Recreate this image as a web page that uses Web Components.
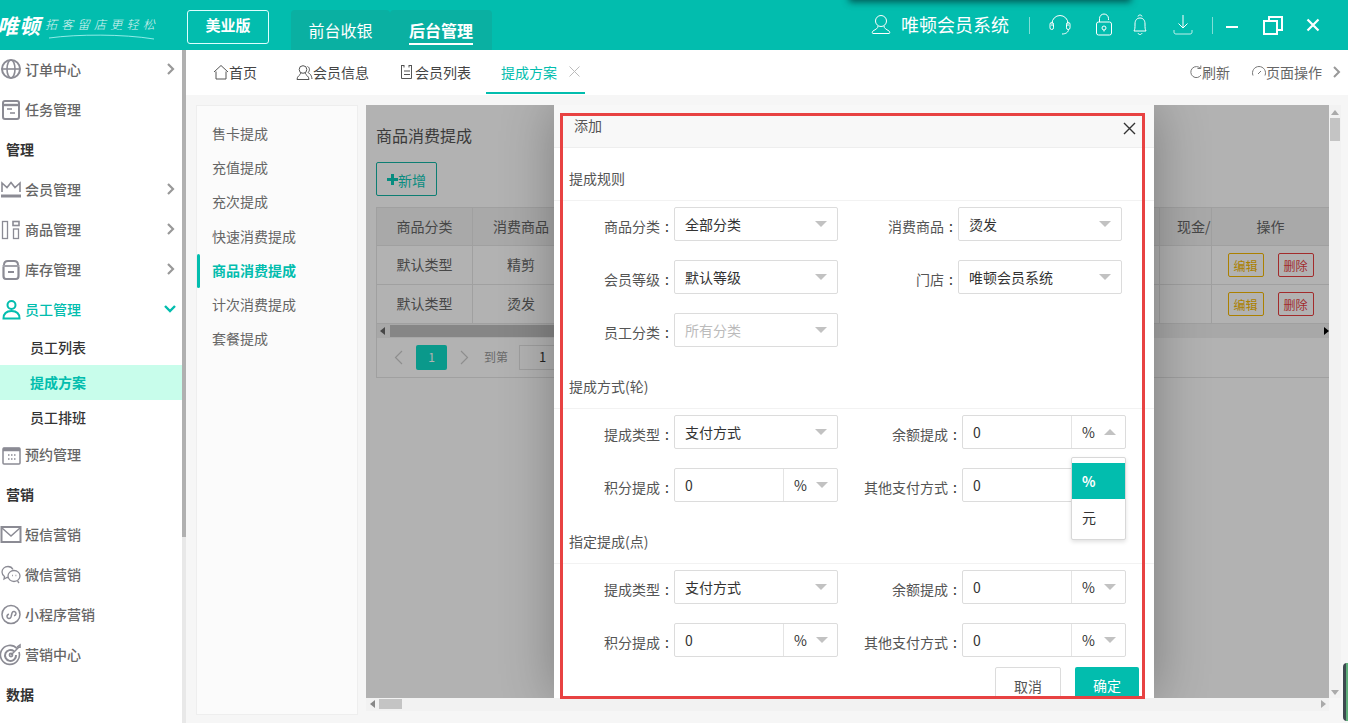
<!DOCTYPE html>
<html lang="zh">
<head>
<meta charset="utf-8">
<title>唯顿会员系统</title>
<style>
    html, body { margin: 0; height: 100%; overflow: hidden; background: #f6f6f6; }
    body { font: 14px "Noto Sans CJK SC", "Liberation Sans", sans-serif; color: #333; }
</style>
</head>
<body>
<app-shell>
    <app-header slot="header"></app-header>
    <side-nav slot="nav"></side-nav>
    <tab-bar slot="tabs"></tab-bar>
    <work-area slot="work"></work-area>
</app-shell>

<script>
const TEAL = '#02bdae';
const svg = (w, h, body, extra = '') =>
    `<svg width="${w}" height="${h}" viewBox="0 0 ${w} ${h}" fill="none" ${extra}>${body}</svg>`;

const NAV_ICONS = {
    globe: '<circle cx="11" cy="11" r="9" stroke-width="2"/><ellipse cx="11" cy="11" rx="4" ry="9" stroke-width="1.6"/><path d="M2 11h18" stroke-width="1.6"/>',
    task: '<rect x="3" y="3" width="16" height="18" rx="2" stroke-width="2"/><path d="M3 7h16" stroke-width="2.4"/><path d="M7 11h5M10 15h5" stroke-width="1.6"/>',
    crown: '<path d="M2 14V5l5 4.500 4-5 4 5 5-4.500v9" stroke-width="1.600"/><path d="M1 18h20" stroke-width="3"/>',
    goods: '<rect x="2.500" y="3.500" width="5" height="17" stroke-width="1.300"/><rect x="13" y="3.500" width="6" height="4" stroke-width="1.600"/><rect x="13.500" y="11" width="5" height="9.500" stroke-width="1.300"/>',
    store: '<path d="M4 7c0-3 1-4 4-4h6c3 0 4 1 4 4" stroke-width="2"/><path d="M2.500 8h17" stroke-width="1.600"/><path d="M3.500 9v9c0 2 1 3 2.500 3h10c1.500 0 2.500-1 2.500-3V9" stroke-width="2.200"/><path d="M8 14h6" stroke-width="2"/>',
    person: '<circle cx="11.500" cy="7" r="4" stroke-width="2"/><path d="M3.500 20.500c0-5 3-7.500 8-7.500s8 2.500 8 7.500z" stroke-width="2"/>',
    calendar: '<rect x="3" y="5" width="17" height="16" rx="1" stroke-width="1.500"/><path d="M3 6.500h17" stroke-width="3.500"/><path d="M8 12h1.500M11 12h1.500M14 12h1.500M8 16h1.500M11 16h1.500M14 16h1.500" stroke-width="1.300"/>',
    mail: '<rect x="1.500" y="4" width="19" height="15" stroke-width="2"/><path d="M2 5l9 8 9-8" stroke-width="1.500"/>',
    wechat: '<path d="M13 6.500C12 4.500 10 3.500 8 3.500 4.500 3.500 2 6 2 9c0 2 1 3.500 2.500 4.500L4 16l3-1.500h1" stroke-width="1.300"/><ellipse cx="14" cy="13" rx="6" ry="5.500" stroke-width="1.300"/><path d="M12 12.500h.8M15.500 12.500h.8" stroke-width="1.400"/><path d="M17.500 18l1.500 2" stroke-width="1.300"/>',
    mini: '<circle cx="11" cy="11.500" r="9" stroke-width="1.500"/><path d="M7 13.500c0 2 3 3 4 .5l1-4c.8-2.500 4-1.500 4 .5 0 1.500-1 2-2 2.200M7 13.500c0-1.300 1-2.200 2-2.300" stroke-width="1.500"/>',
    target: '<path d="M17 5.500A9.500 9.500 0 1 0 19 9" stroke-width="1.600"/><path d="M14 8.200A5.500 5.500 0 1 0 16 12" stroke-width="2"/><circle cx="11" cy="12" r="1.600" stroke-width="1.600"/><path d="M11 12l8-8M17 4l3-2v3" stroke-width="1.500"/>'
};

class AppShell extends HTMLElement {
    constructor() {
        super();
        this.attachShadow({ mode: 'open' });
        this.shadowRoot.innerHTML = `
            <style>
                :host { display: grid; grid-template-columns: 186px 1fr; grid-template-rows: 50px 45px 1fr; width: 1348px; height: 723px; overflow: hidden; position: relative; }
                .top { grid-column: 1 / 3; display: block; }
                .nav { grid-row: 2 / 4; min-height: 0; }
                .widget { position: absolute; right: 0; top: 663px; width: 5px; height: 58px; background: #3d4a50; border-radius: 4px 0 0 4px; border-right: 2px solid #5fae7a; box-sizing: border-box; }
            </style>
            <div class="top"><slot name="header"></slot></div>
            <div class="nav"><slot name="nav"></slot></div>
            <div><slot name="tabs"></slot></div>
            <div><slot name="work"></slot></div>
            <div class="widget"></div>
        `;
    }
}

class AppHeader extends HTMLElement {
    constructor() {
        super();
        this.attachShadow({ mode: 'open' });
        const s = 'stroke="#fff" stroke-width="1"';
        this.shadowRoot.innerHTML = `
            <style>
                :host { display: flex; align-items: stretch; height: 50px; background: ${TEAL}; color: #fff; position: relative; overflow: hidden; }
                .logo { width: 187px; flex: none; display: flex; align-items: center; overflow: hidden; position: relative; }
                .brand { font-size: 21px; font-weight: 700; font-style: italic; margin-left: -3px; letter-spacing: 1px; white-space: nowrap; line-height: 50px; }
                .slogan { font-size: 12px; font-weight: 300; font-style: italic; letter-spacing: 4.300px; margin-left: 4px; white-space: nowrap; opacity: .85; margin-top: -3px; }
                .curve { position: absolute; left: 48px; top: 33px; }
                .edition { align-self: flex-start; margin-top: 10px; width: 82px; height: 34px; box-sizing: border-box; border: 1px solid #dff; border-radius: 3px; text-align: center; font-size: 15px; font-weight: 700; line-height: 28px; flex: none; }
                .modes { display: flex; margin: 10px 0 0 22px; flex: none; }
                .mode { font-size: 16px; background: #0ab0a2; height: 40px; line-height: 41px; border-radius: 4px 4px 0 0; text-align: center; }
                .mode span { display: inline-block; height: 33px; }
                .mode.first { width: 99px; }
                .mode.on { width: 102px; font-weight: 700; }
                .mode.on span { border-bottom: 2px solid #fff; }
                .tools { margin-left: auto; display: flex; align-items: center; height: 50px; }
                .name { font-size: 18px; margin-left: 10px; line-height: 50px; white-space: nowrap; position: relative; top: -1px; }
                .sep { width: 1px; height: 17px; background: #7fded6; }
                .tools svg { display: block; flex: none; }
                .shade { position: absolute; left: 851px; top: -6px; width: 278px; height: 6px; box-shadow: 0 0 7px 2px rgba(0, 50, 50, .75); }
            </style>
            <div class="logo">
                <span class="brand">唯顿</span><span class="slogan">拓客留店更轻松</span>
                ${svg(110, 8, '<path d="M1 5C30 1 75 1 106 6" stroke="#cff" stroke-width=".7"/>', 'class="curve"')}
            </div>
            <div class="edition">美业版</div>
            <div class="modes">
                <div class="mode first"><span>前台收银</span></div>
                <div class="mode on"><span>后台管理</span></div>
            </div>
            <div class="tools">
                ${svg(20, 22, `<circle cx="10" cy="7" r="5.500" ${s}/><path d="M7 12c0 2.500-2 3-5 5-1 .8-1 2.500 0 2.500h16c1 0 1-1.700 0-2.500-3-2-5-2.500-5-5" ${s}/>`)}
                <span class="name">唯顿会员系统</span>
                <span class="sep" style="margin-left:20px"></span>
                ${svg(22, 22, `<path d="M3 12V9.500a8 8 0 0 1 16 0V12" ${s}/><rect x="1" y="8.500" width="3.500" height="7" rx="1.700" ${s}/><rect x="17.500" y="8.500" width="3.500" height="7" rx="1.700" ${s}/><path d="M19.500 15.500c0 2.500-2.500 4.500-6.500 4.500" ${s}/>`, 'style="margin-left:19px"')}
                ${svg(18, 24, `<rect x="1.500" y="9" width="15" height="13" rx="2" ${s}/><path d="M4.500 9V5.500a4.500 4.500 0 0 1 9 0V7" ${s}/><circle cx="9" cy="15" r="2" ${s}/><path d="M9 17v1.500" ${s}/>`, 'style="margin-left:24px"')}
                ${svg(18, 24, `<path d="M3 18c1-2 1-3 1-7 0-4 2-6 5-6s5 2 5 6c0 4 0 5 1 7z" ${s}/><path d="M7 3.500c0-2 4-2 4 0M7 20c.5 2 3.500 2 4 0" ${s}/>`, 'style="margin-left:18px"')}
                ${svg(22, 24, `<path d="M11 2v13M6.500 10.500L11 15l4.500-4.500" ${s}/><path d="M2 17v2c0 1 .5 2 2 2h14c1.500 0 2-1 2-2v-2" ${s} opacity=".75"/>`, 'style="margin-left:23px"')}
                <span class="sep" style="margin-left:18px"></span>
                ${svg(12, 4, '<path d="M0 2h12" stroke="#fff" stroke-width="2"/>', 'style="margin-left:13px;margin-top:4px"')}
                ${svg(20, 19, '<rect x="1" y="5" width="13" height="13" stroke="#fff" stroke-width="2"/><path d="M6 4V1h13v13h-4" stroke="#fff" stroke-width="2"/>', 'style="margin-left:25px"')}
                ${svg(14, 14, '<path d="M1.500 1.500l11 11M12.500 1.500l-11 11" stroke="#fff" stroke-width="2.200"/>', 'style="margin-left:23px;margin-right:28px"')}
            </div>
            <div class="shade"></div>
        `;
    }
}

class NavItem extends HTMLElement {
    constructor() {
        super();
        this.attachShadow({ mode: 'open' });
        const icon = NAV_ICONS[this.getAttribute('icon')] || '';
        const arrow = this.getAttribute('arrow');
        const chevron = arrow === 'down'
            ? svg(14, 10, '<path d="M2 2l5 5 5-5" stroke="currentColor" stroke-width="2.400"/>')
            : arrow === 'right'
                ? svg(10, 14, '<path d="M2 2l5 5-5 5" stroke="#999" stroke-width="2.200"/>')
                : '';
        this.shadowRoot.innerHTML = `
            <style>
                :host { display: flex; align-items: center; height: 40px; box-sizing: border-box; padding-bottom: 2px; color: #666; font-size: 14px; font-weight: 500; }
                :host([active]) { color: ${TEAL}; }
                svg.icon { margin-right: 3px; flex: none; stroke: #8b8b94; position: relative; top: 1px; }
                :host([active]) svg.icon { stroke: ${TEAL}; }
                .arrow { position: absolute; left: 166px; display: flex; }
                :host([arrow="down"]) .arrow { left: 163px; }
            </style>
            ${svg(22, 24, `<g>${icon}</g>`, 'class="icon"')}
            <slot></slot>
            <span class="arrow">${chevron}</span>
        `;
    }
}

class NavTitle extends HTMLElement {
    constructor() {
        super();
        this.attachShadow({ mode: 'open' });
        this.shadowRoot.innerHTML = `
            <style>:host { display: block; height: 40px; line-height: 38px; padding-left: 6px; font-size: 14px; font-weight: 700; color: #333; }</style>
            <slot></slot>
        `;
    }
}

class NavSub extends HTMLElement {
    constructor() {
        super();
        this.attachShadow({ mode: 'open' });
        this.shadowRoot.innerHTML = `
            <style>
                :host { display: block; height: 35px; line-height: 35px; padding-left: 30px; font-size: 14px; font-weight: 500; color: #333; }
                :host([active]) { background: #c8fdeb; color: ${TEAL}; font-weight: 700; }
            </style>
            <slot></slot>
        `;
    }
}

class SideNav extends HTMLElement {
    constructor() {
        super();
        this.attachShadow({ mode: 'open' });
        this.shadowRoot.innerHTML = `
            <style>
                :host { display: flex; height: 673px; background: #fff; overflow: hidden; }
                .list { width: 182px; flex: none; position: relative; }
                .bar { width: 4px; background: #e8e8e8; }
                .thumb { height: 487px; background: #b0b0b0; }
            </style>
            <div class="list">
                <nav-item icon="globe" arrow="right">订单中心</nav-item>
                <nav-item icon="task">任务管理</nav-item>
                <nav-title>管理</nav-title>
                <nav-item icon="crown" arrow="right">会员管理</nav-item>
                <nav-item icon="goods" arrow="right">商品管理</nav-item>
                <nav-item icon="store" arrow="right">库存管理</nav-item>
                <nav-item icon="person" arrow="down" active>员工管理</nav-item>
                <nav-sub>员工列表</nav-sub>
                <nav-sub active>提成方案</nav-sub>
                <nav-sub>员工排班</nav-sub>
                <nav-item icon="calendar">预约管理</nav-item>
                <nav-title>营销</nav-title>
                <nav-item icon="mail">短信营销</nav-item>
                <nav-item icon="wechat">微信营销</nav-item>
                <nav-item icon="mini">小程序营销</nav-item>
                <nav-item icon="target">营销中心</nav-item>
                <nav-title>数据</nav-title>
            </div>
            <div class="bar"><div class="thumb"></div></div>
        `;
    }
}

class TabBar extends HTMLElement {
    constructor() {
        super();
        this.attachShadow({ mode: 'open' });
        const g = 'stroke="#555" stroke-width="1"';
        const q = 'stroke="#777" stroke-width="1"';
        this.shadowRoot.innerHTML = `
            <style>
                :host { display: flex; align-items: stretch; height: 45px; background: #fff; padding-left: 27px; box-sizing: border-box; font-size: 14px; color: #444; }
                .tab { display: flex; align-items: center; height: 45px; box-sizing: border-box; padding-bottom: 1px; }
                .tab svg, .act svg { flex: none; display: block; }
                .tab.on { color: ${TEAL}; border-bottom: 2px solid ${TEAL}; height: 44px; padding: 1px 5px 0 15px; margin-left: 15px; }
                .tab.on svg { margin-left: 12px; }
                .right { margin-left: auto; display: flex; align-items: center; color: #666; padding-bottom: 1px; }
                .act { display: flex; align-items: center; }
            </style>
            <div class="tab" style="margin-right:39px">
                ${svg(16, 16, `<path d="M1 8l7-6.500L15 8M3 7.500V15h10V7.500" ${g}/>`)}首页
            </div>
            <div class="tab" style="margin-right:30px">
                ${svg(17, 17, `<circle cx="7" cy="5.500" r="3.800" ${g}/><path d="M5 9C4.500 11 1 12 1 15.500h12C13 12 9.500 11 9 9M11.500 2.500c2.500 1 2.500 4.500.5 6 1.500 1 3.500 2 4 6.500" ${g}/>`)}会员信息
            </div>
            <div class="tab">
                ${svg(16, 16, `<path d="M2.500 1.500v13h10v-13M2 1.500h3M10 1.500h3" ${g}/><path d="M5 1v2.500M10 1v2.500M5 7h6M5 10.500h6" ${g}/>`)}会员列表
            </div>
            <div class="tab on">
                提成方案${svg(11, 11, '<path d="M.5.500l10 10M10.500.5l-10 10" stroke="#bbb" stroke-width="1"/>')}
            </div>
            <div class="right">
                <div class="act">
                    ${svg(13, 14, `<path d="M11.500 3.500A5.500 5.500 0 1 0 12 10M8.500 3.500h3.300V.5" ${q}/>`)}刷新
                </div>
                <div class="act" style="margin-left:22px">
                    ${svg(14, 14, `<path d="M1 10.500a6.500 6.500 0 1 1 12 0M6 9l3-3" ${q}/>`)}页面操作
                </div>
                ${svg(10, 14, '<path d="M2 2l5 5-5 5" stroke="#999" stroke-width="2"/>', 'style="margin:0 6px 0 10px"')}
            </div>
        `;
    }
}

class CommissionMenu extends HTMLElement {
    constructor() {
        super();
        this.attachShadow({ mode: 'open' });
        const items = ['售卡提成', '充值提成', '充次提成', '快速消费提成', '商品消费提成', '计次消费提成', '套餐提成'];
        this.shadowRoot.innerHTML = `
            <style>
                :host { display: block; width: 162px; height: 610px; box-sizing: border-box; border: 1px solid #eee; background: #fbfbfb; padding-top: 10px; color: #666; font-size: 14px; }
                div { height: 34.200px; line-height: 34.200px; padding-left: 15px; position: relative; }
                .on { color: ${TEAL}; font-weight: 700; }
                .on::before { content: ""; position: absolute; left: 0; top: 1px; width: 3px; height: 34px; background: ${TEAL}; border-radius: 2px; }
            </style>
            ${items.map((t, i) => `<div class="${i === 4 ? 'on' : ''}">${t}</div>`).join('')}
        `;
    }
}

class CommissionPage extends HTMLElement {
    constructor() {
        super();
        this.attachShadow({ mode: 'open' });
        const rows = [['默认类型', '精剪'], ['默认类型', '烫发']];
        this.shadowRoot.innerHTML = `
            <style>
                :host { display: block; height: 100%; background: #fff; padding: 19px 0 0 10px; box-sizing: border-box; color: #666; font-size: 14px; overflow: hidden; }
                h2 { margin: 0 0 16px; font-size: 16px; font-weight: 400; line-height: 22px; color: #555; }
                .add { width: 61px; height: 34px; box-sizing: border-box; border: 1px solid #14b5a5; border-radius: 2px; color: #0cc9b8; display: flex; align-items: center; justify-content: center; margin-bottom: 11px; padding-top: 1px; }
                .add svg { flex: none; }
                .table { width: 953px; border: 1px solid #e6e6e6; border-right: 0; box-sizing: border-box; }
                .row { display: grid; grid-template-columns: 96px 97px 590px 52px 118px; height: 39px; border-bottom: 1px solid #e6e6e6; box-sizing: border-box; }
                .row.head { height: 38px; background: #f2f2f2; }
                .row > div { display: flex; align-items: center; justify-content: center; gap: 14px; border-right: 1px solid #e6e6e6; overflow: hidden; white-space: nowrap; padding-bottom: 2px; box-sizing: border-box; }
                .row > div.cut { justify-content: flex-start; padding-left: 17px; }
                .row > div.ops { padding-bottom: 0; }
                .scroll { height: 14px; background: #f1f1f1; position: relative; }
                .scroll i { position: absolute; left: 13px; width: 640px; top: 1px; height: 12px; background: #c1c1c1; }
                .scroll b { position: absolute; left: 3px; top: 3px; border: 4px solid transparent; border-left: 0; border-right: 5px solid #666; }
                .scroll u { position: absolute; right: 0; top: 3px; border: 4px solid transparent; border-right: 0; border-left: 5px solid #000; }
                .pager { height: 39px; display: flex; align-items: center; padding-left: 17px; font-size: 12px; color: #999; box-sizing: border-box; }
                .cur { width: 31px; height: 25px; background: #0fdcc8; color: #fff; border-radius: 2px; text-align: center; line-height: 24px; margin: 0 13px 0 13px; }
                .go { width: 70px; height: 25px; box-sizing: border-box; border: 1px solid #e2e2e2; margin-left: 11px; color: #333; padding-left: 19px; line-height: 21px; font-size: 13px; }
                .btn { width: 36px; height: 24px; box-sizing: border-box; border: 1px solid; border-radius: 2px; font-size: 12px; display: flex; align-items: center; justify-content: center; }
                .edit { color: #f5b800; border-color: #f5b800; }
                .del { color: #e94040; border-color: #e94040; }
            </style>
            <h2>商品消费提成</h2>
            <div class="add">${svg(11, 11, '<path d="M5.500 0v11M0 5.500h11" stroke="currentColor" stroke-width="3"/>')}新增</div>
            <div class="table">
                <div class="row head"><div>商品分类</div><div>消费商品</div><div></div><div class="cut">现金/</div><div>操作</div></div>
                ${rows.map(r => `<div class="row"><div>${r[0]}</div><div>${r[1]}</div><div></div><div></div><div class="ops"><span class="btn edit">编辑</span><span class="btn del">删除</span></div></div>`).join('')}
                <div class="scroll"><b></b><i></i><u></u></div>
                <div class="pager">
                    ${svg(9, 15, '<path d="M8 1L1.500 7.500 8 14" stroke="#ccc" stroke-width="1.200"/>')}
                    <span class="cur">1</span>
                    ${svg(9, 15, '<path d="M1 1l6.500 6.500L1 14" stroke="#ccc" stroke-width="1.200"/>')}
                    <span style="margin-left:15px;position:relative;top:-1px">到第</span>
                    <span class="go">1</span>
                </div>
            </div>
        `;
    }
}

class FormSelect extends HTMLElement {
    constructor() {
        super();
        this.attachShadow({ mode: 'open' });
        this.shadowRoot.innerHTML = `
            <style>
                :host { display: flex; align-items: center; height: 34px; width: 164px; box-sizing: border-box; border: 1px solid #dcdcdc; border-radius: 2px; padding: 0 10px; background: #fff; font-size: 14px; color: #333; position: relative; flex: none; }
                :host([disabled]) { color: #bbb; }
                .caret { margin-left: auto; width: 0; height: 0; border: 6px solid transparent; border-top-color: #c2c2c2; border-bottom: 0; margin-top: -1px; }
            </style>
            <span><slot></slot></span>
            <i class="caret"></i>
        `;
    }
}

class UnitInput extends HTMLElement {
    constructor() {
        super();
        this.attachShadow({ mode: 'open' });
        const open = this.hasAttribute('open');
        this.shadowRoot.innerHTML = `
            <style>
                :host { display: flex; height: 34px; width: 164px; box-sizing: border-box; border: 1px solid #dcdcdc; border-radius: 2px; background: #fff; font-size: 14px; color: #333; position: relative; flex: none; }
                :host([covered]) .unit span { visibility: hidden; }
                .num { flex: 1; padding-left: 10px; line-height: 33px; }
                .unit { width: 54px; box-sizing: border-box; border-left: 1px solid #e4e4e4; display: flex; align-items: center; padding: 0 9px 0 10px; }
                .unit span { line-height: 33px; }
                .caret { margin-left: auto; width: 0; height: 0; border: 6px solid transparent; border-top-color: #c2c2c2; border-bottom: 0; margin-top: -1px; }
                .caret.up { border-top: 0; border-bottom: 6px solid #c2c2c2; }
                .menu { position: absolute; z-index: 5; left: 108px; top: 41px; width: 55px; height: 83px; box-sizing: border-box; background: #fff; border: 1px solid #d8d8d8; border-radius: 2px; padding-top: 5px; box-shadow: 0 2px 4px rgba(0, 0, 0, .12); }
                .menu div { height: 36px; line-height: 36px; padding-left: 10px; }
                .menu .on { background: ${TEAL}; color: #fff; font-weight: 700; }
            </style>
            <div class="num">0</div>
            <div class="unit"><span>%</span><i class="caret ${open ? 'up' : ''}"></i></div>
            ${open ? '<div class="menu"><div class="on">%</div><div>元</div></div>' : ''}
        `;
        if (open) this.style.zIndex = 5;
    }
}

class FormField extends HTMLElement {
    constructor() {
        super();
        this.attachShadow({ mode: 'open' });
        const w = this.getAttribute('label-width') || 105;
        this.shadowRoot.innerHTML = `
            <style>
                :host { display: flex; align-items: center; color: #555; font-size: 14px; }
                label { width: ${w}px; flex: none; display: flex; justify-content: flex-end; white-space: nowrap; padding-top: 3px; box-sizing: border-box; }
                b { font-weight: 400; width: 14px; text-align: center; color: #333; }
            </style>
            <label><slot name="label"></slot><b>:</b></label>
            <slot></slot>
        `;
    }
}

class FormSection extends HTMLElement {
    constructor() {
        super();
        this.attachShadow({ mode: 'open' });
        this.shadowRoot.innerHTML = `
            <style>
                :host { display: block; margin-bottom: 9px; }
                h3 { margin: 0 0 6px; height: 53px; box-sizing: border-box; padding: 19px 0 0 15px; font-size: 14px; font-weight: 400; line-height: 22px; color: #555; border-bottom: 1px solid #f2f2f2; }
                .grid { display: flex; flex-wrap: wrap; gap: 19px 0; padding-left: 15px; width: 580px; }
            </style>
            <h3><slot name="title"></slot></h3>
            <div class="grid"><slot></slot></div>
        `;
    }
}

class AddModal extends HTMLElement {
    constructor() {
        super();
        this.attachShadow({ mode: 'open' });
        const pay = (openFlag) => `
            <form-field><span slot="label">提成类型</span><form-select>支付方式</form-select></form-field>
            <form-field label-width="124"><span slot="label">余额提成</span><unit-input ${openFlag ? 'open' : ''}></unit-input></form-field>
            <form-field><span slot="label">积分提成</span><unit-input></unit-input></form-field>
            <form-field label-width="124"><span slot="label">其他支付方式</span><unit-input ${openFlag ? 'covered' : ''}></unit-input></form-field>`;
        this.shadowRoot.innerHTML = `
            <style>
                :host { display: block; position: absolute; left: 188px; top: 0; width: 600px; height: 100%; background: #fff; box-shadow: 1px 1px 50px rgba(0, 0, 0, .3); overflow: hidden; }
                .title { height: 43px; box-sizing: border-box; background: #f8f8f8; border-bottom: 1px solid #eee; padding-left: 20px; line-height: 41px; font-size: 14px; color: #555; position: relative; }
                .title svg { position: absolute; right: 18px; top: 17px; }
                .foot { display: flex; justify-content: flex-end; gap: 14px; padding-right: 15px; margin-top: 10px; }
                .foot div { height: 38px; line-height: 36px; text-align: center; border-radius: 2px; box-sizing: border-box; font-size: 14px; }
                .cancel { width: 66px; border: 1px solid #dcdcdc; color: #555; }
                .ok { width: 64px; background: ${TEAL}; color: #fff; }
            </style>
            <div class="title">添加${svg(13, 13, '<path d="M1 1l11 11M12 1L1 12" stroke="#333" stroke-width="1.400"/>')}</div>
            <form-section>
                <span slot="title">提成规则</span>
                <form-field><span slot="label">商品分类</span><form-select>全部分类</form-select></form-field>
                <form-field label-width="120"><span slot="label">消费商品</span><form-select>烫发</form-select></form-field>
                <form-field><span slot="label">会员等级</span><form-select>默认等级</form-select></form-field>
                <form-field label-width="120"><span slot="label">门店</span><form-select>唯顿会员系统</form-select></form-field>
                <form-field><span slot="label">员工分类</span><form-select disabled>所有分类</form-select></form-field>
            </form-section>
            <form-section><span slot="title">提成方式(轮)</span>${pay(true)}</form-section>
            <form-section><span slot="title">指定提成(点)</span>${pay(false)}</form-section>
            <div class="foot"><div class="cancel">取消</div><div class="ok">确定</div></div>
        `;
    }
}

class WorkArea extends HTMLElement {
    constructor() {
        super();
        this.attachShadow({ mode: 'open' });
        this.shadowRoot.innerHTML = `
            <style>
                :host { display: flex; height: 628px; padding: 10px 0 0 10px; box-sizing: border-box; background: #f6f6f6; position: relative; overflow: hidden; }
                commission-menu { margin-right: 8px; flex: none; }
                .grid { display: grid; grid-template-columns: 963px 12px; grid-template-rows: 593px 13px; flex: none; background: #fff; align-self: flex-start; }
                .frame { position: relative; overflow: hidden; }
                .mask { position: absolute; inset: 0; background: rgba(0, 0, 0, .3); }
                .v, .h { background: #f2f2f2; position: relative; }
                .v i { position: absolute; left: 1px; top: 13px; width: 10px; height: 23px; background: #c4c4c4; }
                .v b { position: absolute; left: 2px; top: 5px; border: 4px solid transparent; border-top: 0; border-bottom: 5px solid #aaa; }
                .v u { position: absolute; left: 2px; bottom: 3px; border: 4px solid transparent; border-bottom: 0; border-top: 5px solid #aaa; }
                .h i { position: absolute; left: 13px; top: 1px; width: 23px; height: 10px; background: #c4c4c4; }
                .h b { position: absolute; left: 4px; top: 2px; border: 4px solid transparent; border-left: 0; border-right: 5px solid #888; }
                .h u { position: absolute; right: 3px; top: 2px; border: 4px solid transparent; border-right: 0; border-left: 5px solid #aaa; }
                .corner { background: #f6f6f6; }
                .mark { position: absolute; left: 374px; top: 18px; width: 585px; height: 586px; box-sizing: border-box; border: 3px solid #e84242; pointer-events: none; }
            </style>
            <commission-menu></commission-menu>
            <div class="grid">
                <div class="frame">
                    <commission-page></commission-page>
                    <div class="mask"></div>
                    <add-modal></add-modal>
                </div>
                <div class="v"><b></b><i></i><u></u></div>
                <div class="h"><b></b><i></i><u></u></div>
                <div class="corner"></div>
            </div>
            <div class="mark"></div>
        `;
    }
}

customElements.define('app-shell', AppShell);
customElements.define('app-header', AppHeader);
customElements.define('nav-item', NavItem);
customElements.define('nav-title', NavTitle);
customElements.define('nav-sub', NavSub);
customElements.define('side-nav', SideNav);
customElements.define('tab-bar', TabBar);
customElements.define('commission-menu', CommissionMenu);
customElements.define('commission-page', CommissionPage);
customElements.define('form-select', FormSelect);
customElements.define('unit-input', UnitInput);
customElements.define('form-field', FormField);
customElements.define('form-section', FormSection);
customElements.define('add-modal', AddModal);
customElements.define('work-area', WorkArea);
</script>
</body>
</html>
